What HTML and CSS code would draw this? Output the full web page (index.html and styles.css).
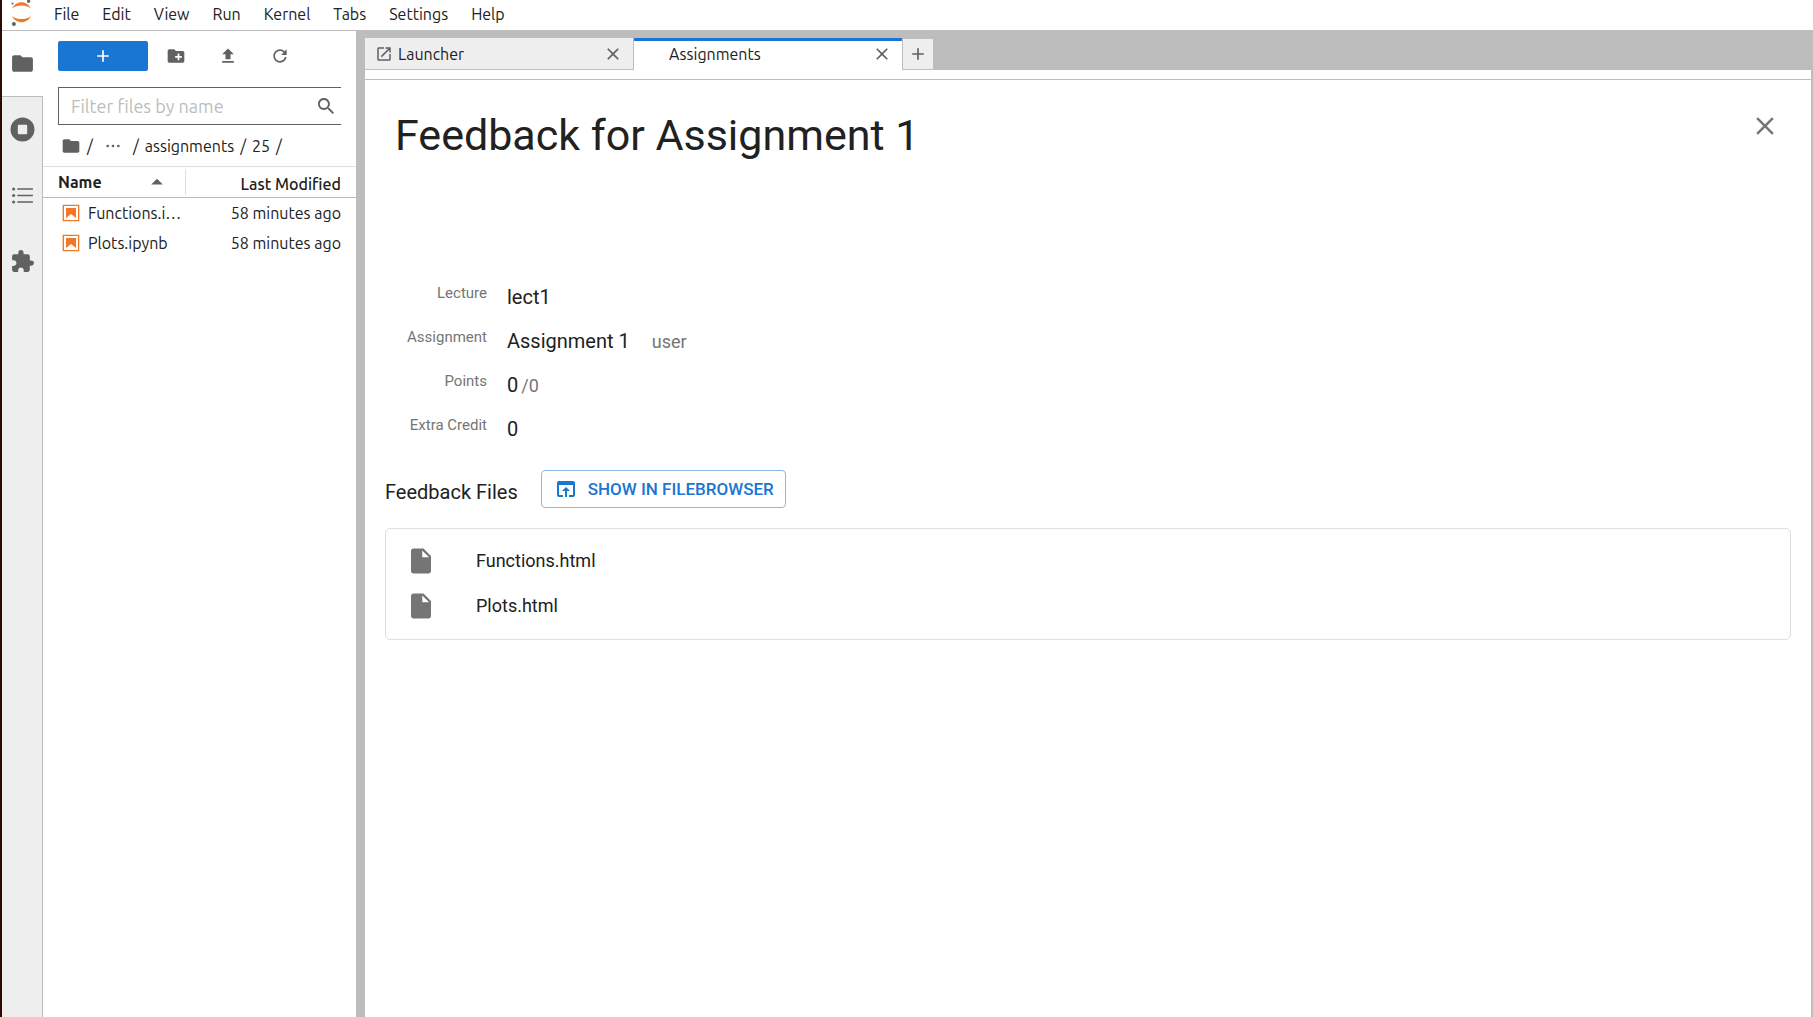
FILE: index.html
```html
<!DOCTYPE html>
<html lang="en">
<head>
<meta charset="utf-8">
<title>Assignments - JupyterLab</title>
<link rel="stylesheet" href="styles.css">
</head>
<body>
<div class="app">
  <header class="topbar">
    <svg class="logo" viewBox="0 0 24 30" aria-hidden="true">
      <path fill="#f37726" d="M2 8.500C4 4.600 7.600 2.200 11.500 2.200s7.500 2.400 9.500 6.300C18.500 6.300 15.200 5.400 11.500 5.400S4.500 6.300 2 8.500z"/>
      <path fill="#f37726" d="M2 16c2 3.900 5.600 6.300 9.500 6.300S19 19.900 21 16c-2.500 2.200-5.800 3.100-9.500 3.100S4.500 18.200 2 16z"/>
      <circle cx="18.600" cy="1.300" r="1.600" fill="#616161"/><circle cx="2.500" cy="3.600" r="1.100" fill="#757575"/><circle cx="3.900" cy="24" r="2" fill="#616161"/>
    </svg>
    <nav class="menu" aria-label="Main menu">
      <button>File</button><button>Edit</button><button>View</button><button>Run</button><button>Kernel</button><button>Tabs</button><button>Settings</button><button>Help</button>
    </nav>
  </header>
  <div class="workspace">
    <nav class="activity" aria-label="Sidebar">
      <button class="activity-tab current" aria-label="File Browser"><svg class="icon-lg" viewBox="0 0 24 24"><path d="M10 4H4c-1.100 0-1.990.9-1.990 2L2 18c0 1.100.9 2 2 2h16c1.100 0 2-.9 2-2V8c0-1.100-.9-2-2-2h-8l-2-2z"/></svg></button>
      <button class="activity-tab" aria-label="Running"><svg class="icon-lg" viewBox="0 0 24 24"><path fill-rule="evenodd" d="M12 .500a11.500 11.500 0 1 0 0 23 11.500 11.500 0 0 0 0-23zM8.500 7.500h7a1 1 0 0 1 1 1v7a1 1 0 0 1-1 1h-7a1 1 0 0 1-1-1v-7a1 1 0 0 1 1-1z"/></svg></button>
      <button class="activity-tab" aria-label="Table of Contents"><svg class="icon-lg" viewBox="0 0 24 24"><path d="M7 5h15v1.500H7zM7 11.250h15v1.500H7zM7 17.500h15V19H7z"/><circle cx="3.500" cy="5.750" r="1.500"/><circle cx="3.500" cy="12" r="1.500"/><circle cx="3.500" cy="18.250" r="1.500"/></svg></button>
      <button class="activity-tab" aria-label="Extensions"><svg class="icon-lg" viewBox="0 0 24 24"><path d="M20.500 11H19V7c0-1.100-.9-2-2-2h-4V3.500C13 2.120 11.880 1 10.500 1S8 2.120 8 3.500V5H4c-1.100 0-1.990.9-1.990 2v3.800H3.500c1.490 0 2.700 1.210 2.700 2.700s-1.210 2.700-2.700 2.700H2V20c0 1.100.9 2 2 2h3.800v-1.500c0-1.490 1.210-2.700 2.700-2.700 1.490 0 2.700 1.210 2.700 2.700V22H17c1.100 0 2-.9 2-2v-4h1.500c1.380 0 2.500-1.120 2.500-2.500S21.880 11 20.500 11z"/></svg></button>
    </nav>
    <aside class="browser">
      <div class="toolbar">
        <button class="new" aria-label="New Launcher"><svg class="icon" viewBox="0 0 24 24"><path d="M19 13h-6v6h-2v-6H5v-2h6V5h2v6h6v2z"/></svg></button>
        <button class="tool" aria-label="New Folder"><svg class="icon" viewBox="0 0 24 24"><path d="M20 6h-8l-2-2H4c-1.110 0-1.990.89-1.990 2L2 18c0 1.110.89 2 2 2h16c1.110 0 2-.89 2-2V8c0-1.110-.89-2-2-2zm-1 8h-3v3h-2v-3h-3v-2h3V9h2v3h3v2z"/></svg></button>
        <button class="tool" aria-label="Upload Files"><svg class="icon" viewBox="0 0 24 24"><path d="M9 16h6v-6h4l-7-7-7 7h4zm-4 2h14v2H5z"/></svg></button>
        <button class="tool" aria-label="Refresh"><svg class="icon" viewBox="0 0 18 18"><path d="M9 13.500c-2.490 0-4.500-2.010-4.500-4.500S6.510 4.500 9 4.500c1.240 0 2.360.52 3.170 1.330L10 8h5V3l-1.760 1.760C12.150 3.680 10.660 3 9 3 5.690 3 3.010 5.690 3.010 9S5.690 15 9 15c2.970 0 5.430-2.160 5.900-5h-1.520c-.46 2-2.240 3.500-4.380 3.500z"/></svg></button>
      </div>
      <div class="filter">
        <input type="text" placeholder="Filter files by name" aria-label="Filter files by name">
        <svg class="icon" viewBox="0 0 18 18" aria-hidden="true"><path d="M12.100 10.900h-.7l-.2-.2c.8-.9 1.300-2.200 1.300-3.500 0-3-2.400-5.400-5.400-5.400S1.800 4.200 1.800 7.100s2.400 5.400 5.400 5.400c1.300 0 2.500-.5 3.500-1.300l.2.2v.7l4.100 4.100 1.200-1.200-4.100-4.100zm-5 0c-2.100 0-3.700-1.700-3.700-3.700s1.700-3.700 3.700-3.700 3.700 1.700 3.700 3.700-1.600 3.700-3.700 3.700z"/></svg>
      </div>
      <div class="crumbs">
        <a href="#" aria-label="Home"><svg class="icon" viewBox="0 0 24 24"><path d="M10 4H4c-1.100 0-1.990.9-1.990 2L2 18c0 1.100.9 2 2 2h16c1.100 0 2-.9 2-2V8c0-1.100-.9-2-2-2h-8l-2-2z"/></svg></a>
        <span>/</span>
        <a class="more" href="#" aria-label="Parent folders"><svg class="icon" viewBox="0 0 24 24"><circle cx="4" cy="12" r="2"/><circle cx="12" cy="12" r="2"/><circle cx="20" cy="12" r="2"/></svg></a>
        <span>/</span><a href="#">assignments</a><span>/</span><a href="#">25</a><span>/</span>
      </div>
      <table class="files">
        <thead><tr>
          <th class="name"><div class="sort">Name<svg class="icon" viewBox="0 0 24 24" aria-hidden="true"><path d="M5 15l7-7 7 7z"/></svg></div></th>
          <th class="date">Last Modified</th>
        </tr></thead>
        <tbody>
          <tr><td class="name"><div class="file"><svg class="icon" viewBox="0 0 22 22" aria-hidden="true"><path class="orange" d="M18.700 3.300v15.400H3.300V3.300h15.400m1.500-1.500H1.800v18.300h18.300l.1-18.300z"/><path class="orange" d="M16.500 16.500l-5.400-4.300-5.600 4.300v-11h11z"/></svg><span>Functions.ipynb</span></div></td><td class="date">58 minutes ago</td></tr>
          <tr><td class="name"><div class="file"><svg class="icon" viewBox="0 0 22 22" aria-hidden="true"><path class="orange" d="M18.700 3.300v15.400H3.300V3.300h15.400m1.500-1.500H1.800v18.300h18.300l.1-18.300z"/><path class="orange" d="M16.500 16.500l-5.400-4.300-5.600 4.300v-11h11z"/></svg><span>Plots.ipynb</span></div></td><td class="date">58 minutes ago</td></tr>
        </tbody>
      </table>
    </aside>
    <section class="dock">
      <div class="tabs">
        <div class="tab"><svg class="icon-tab" viewBox="0 0 24 24" aria-hidden="true"><path d="M19 19H5V5h7V3H5c-1.110 0-2 .9-2 2v14c0 1.100.89 2 2 2h14c1.100 0 2-.9 2-2v-7h-2v7zM14 3v2h3.590l-9.830 9.830 1.410 1.410L19 6.410V10h2V3h-7z"/></svg><span>Launcher</span><button class="close" aria-label="Close Launcher"><svg class="icon" viewBox="0 0 24 24"><path d="M19 6.410L17.590 5 12 10.590 6.410 5 5 6.410 10.590 12 5 17.590 6.410 19 12 13.410 17.590 19 19 17.590 13.410 12z"/></svg></button></div>
        <div class="tab active"><span>Assignments</span><button class="close" aria-label="Close Assignments"><svg class="icon" viewBox="0 0 24 24"><path d="M19 6.410L17.590 5 12 10.590 6.410 5 5 6.410 10.590 12 5 17.590 6.410 19 12 13.410 17.590 19 19 17.590 13.410 12z"/></svg></button></div>
        <button class="add" aria-label="New tab"><svg class="icon" viewBox="0 0 24 24"><path d="M19 13h-6v6h-2v-6H5v-2h6V5h2v6h6v2z"/></svg></button>
      </div>
      <main class="panel">
        <div class="heading">
          <h1>Feedback for Assignment 1</h1>
          <button class="dismiss" aria-label="Close"><svg viewBox="0 0 24 24"><path d="M19 6.410L17.590 5 12 10.590 6.410 5 5 6.410 10.590 12 5 17.590 6.410 19 12 13.410 17.590 19 19 17.590 13.410 12z"/></svg></button>
        </div>
        <dl class="facts">
          <dt>Lecture</dt><dd>lect1</dd>
          <dt>Assignment</dt><dd>Assignment 1<small class="user">user</small></dd>
          <dt>Points</dt><dd>0<small class="max">/0</small></dd>
          <dt>Extra Credit</dt><dd>0</dd>
        </dl>
        <div class="files-head">
          <h2>Feedback Files</h2>
          <button class="show"><svg viewBox="0 0 24 24" aria-hidden="true"><path d="M19 4H5c-1.110 0-2 .9-2 2v12c0 1.100.89 2 2 2h4v-2H5V8h14v10h-4v2h4c1.100 0 2-.9 2-2V6c0-1.100-.89-2-2-2zm-7 6l-4 4h3v6h2v-6h3l-4-4z"/></svg>SHOW IN FILEBROWSER</button>
        </div>
        <ul class="feedback">
          <li><svg viewBox="0 0 24 24" aria-hidden="true"><path d="M6 2c-1.100 0-1.990.9-1.990 2L4 20c0 1.100.89 2 1.990 2H18c1.100 0 2-.9 2-2V8l-6-6H6zm7 7V3.500L18.500 9H13z"/></svg><a href="#">Functions.html</a></li>
          <li><svg viewBox="0 0 24 24" aria-hidden="true"><path d="M6 2c-1.100 0-1.990.9-1.990 2L4 20c0 1.100.89 2 1.990 2H18c1.100 0 2-.9 2-2V8l-6-6H6zm7 7V3.500L18.500 9H13z"/></svg><a href="#">Plots.html</a></li>
        </ul>
      </main>
    </section>
  </div>
</div>
</body>
</html>
```
FILE: styles.css
```css
* { box-sizing: border-box; }
body {
  margin: 0;
  background: #fff;
  color: #212121;
  font: 16px/20px Ubuntu, "Noto Sans", sans-serif;
}
button, input { font: inherit; color: inherit; }
button { margin: 0; padding: 0; border: 0; background: none; }
a { color: inherit; text-decoration: none; }
svg { display: block; flex: none; fill: #616161; }
.icon { width: 20px; height: 20px; }
.icon-lg { width: 25px; height: 25px; }
.icon-tab { width: 18px; height: 18px; }

.app {
  display: flex;
  flex-direction: column;
  min-height: 100vh;
  border-left: 2px solid #2c0a06;
}
.topbar {
  display: flex;
  height: 31px;
  padding-left: 8px;
  border-bottom: 1px solid #bdbdbd;
}
.logo { width: 24px; height: 30px; }
.menu { display: flex; gap: 1px; padding-left: 9px; }
.menu button { padding: 0 11px 2px; }
.workspace { display: flex; flex: 1; }

.activity {
  display: flex;
  flex-direction: column;
  width: 41px;
  background: #eee;
}
.activity::after { content: ""; flex: 1; border-right: 1px solid #bdbdbd; }
.activity-tab {
  display: grid;
  place-items: center;
  height: 66px;
  border-right: 1px solid #bdbdbd;
}
.activity-tab.current { height: 65px; background: #fff; border-right: 0; box-shadow: 0 1px #bdbdbd; }

.browser { width: 313px; }
.toolbar { display: flex; padding: 10px 0 16px 15px; }
.new {
  display: grid;
  place-items: center;
  width: 90px;
  height: 30px;
  margin-right: 2px;
  border-radius: 2px;
  background: #1976d2;
}
.new svg { fill: #fff; }
.tool { display: grid; place-items: center; width: 52px; height: 30px; }
.filter {
  display: flex;
  align-items: center;
  height: 38px;
  margin: 0 15px;
  padding: 0 5px 0 12px;
  border: 1px solid #616161;
  border-right: 0;
}
.filter input { flex: 1; min-width: 0; padding: 0; border: 0; outline: 0; font-size: 18px; }
.filter input::placeholder { color: #bdbdbd; opacity: 1; }
.crumbs {
  display: flex;
  align-items: center;
  gap: 6px;
  height: 41px;
  padding-left: 18px;
}
.crumbs .more { padding: 0 6px; }
.crumbs .more svg { width: 16px; }

.files { width: 100%; border-collapse: collapse; table-layout: fixed; }
.files th { height: 31px; border-top: 1px solid #e0e0e0; border-bottom: 1px solid #bdbdbd; padding: 0; text-align: left; }
.files td { height: 30px; padding: 0; }
.files th.name { width: 143px; padding-left: 15px; font-weight: 700; }
.files th.date { padding-top: 3px; font-weight: 500; }
.files .date { padding-right: 15px; text-align: right; }
.sort { display: flex; justify-content: space-between; align-items: center; height: 26px; padding-right: 18px; border-right: 1px solid #e0e0e0; }
.file { display: flex; align-items: center; gap: 7px; padding-left: 18px; }
.file span { overflow: hidden; text-overflow: ellipsis; white-space: nowrap; }
.orange { fill: #f37726; }

.dock {
  display: flex;
  flex: 1;
  flex-direction: column;
  min-width: 0;
  border: solid #bdbdbd;
  border-width: 0 2px 0 9px;
}
.tabs { display: flex; padding-top: 7px; background: #bdbdbd; }
.tab {
  display: flex;
  align-items: center;
  gap: 5px;
  width: 269px;
  height: 32px;
  padding: 0 10px;
  border: solid #bdbdbd;
  border-width: 0 1px 1px 0;
  background: #eee;
}
.tab span { flex: 1; }
.tab.active { width: 268px; padding-bottom: 4px; padding-left: 35px; border: 0; border-top: 3px solid #1976d2; background: #fff; }
.add {
  display: grid;
  place-items: center;
  width: 30px;
  height: 30px;
  margin: 1px 0 0 1px;
  background: #eee;
}

.panel {
  flex: 1;
  margin-top: 9px;
  padding: 24px 20px;
  border-top: 1px solid #bdbdbd;
  font-family: Roboto, sans-serif;
}
.heading { display: flex; justify-content: space-between; padding: 0 11px 0 10px; }
.heading h1 { margin: 0; font-size: 43px; font-weight: 400; line-height: 62px; }
.dismiss { width: 30px; height: 30px; margin-top: 7px; }
.dismiss svg { fill: #757575; }
.facts {
  display: grid;
  grid-template-columns: 102px 1fr;
  grid-auto-rows: 44px;
  column-gap: 20px;
  margin: 117px 0 0;
}
.facts dt { color: #757575; font-size: 15px; text-align: right; }
.facts dd { margin: 0; font-size: 20px; line-height: 28px; }
.facts small { color: #757575; font-size: 18px; }
.facts .user { margin-left: 22px; }
.facts .max { margin-left: 3px; }
.files-head { display: flex; gap: 23px; margin-top: 11px; }
.files-head h2 { margin: 0; font-size: 20px; font-weight: 400; line-height: 44px; }
.show {
  display: flex;
  align-items: center;
  gap: 10px;
  height: 38px;
  padding: 0 11px 0 12px;
  border: 1px solid #8cbae8;
  border-radius: 4px;
  color: #1976d2;
  font-size: 17px;
  font-weight: 500;
}
.show svg { width: 24px; height: 24px; fill: #1976d2; }
.feedback {
  margin: 14px 0 0;
  padding: 9px 20px 11px;
  border: 1px solid #e0e0e0;
  border-radius: 5px;
  list-style: none;
  font-size: 18px;
}
.feedback li { display: flex; align-items: center; gap: 40px; height: 45px; }
.feedback svg { width: 30px; height: 30px; fill: #757575; }
```
